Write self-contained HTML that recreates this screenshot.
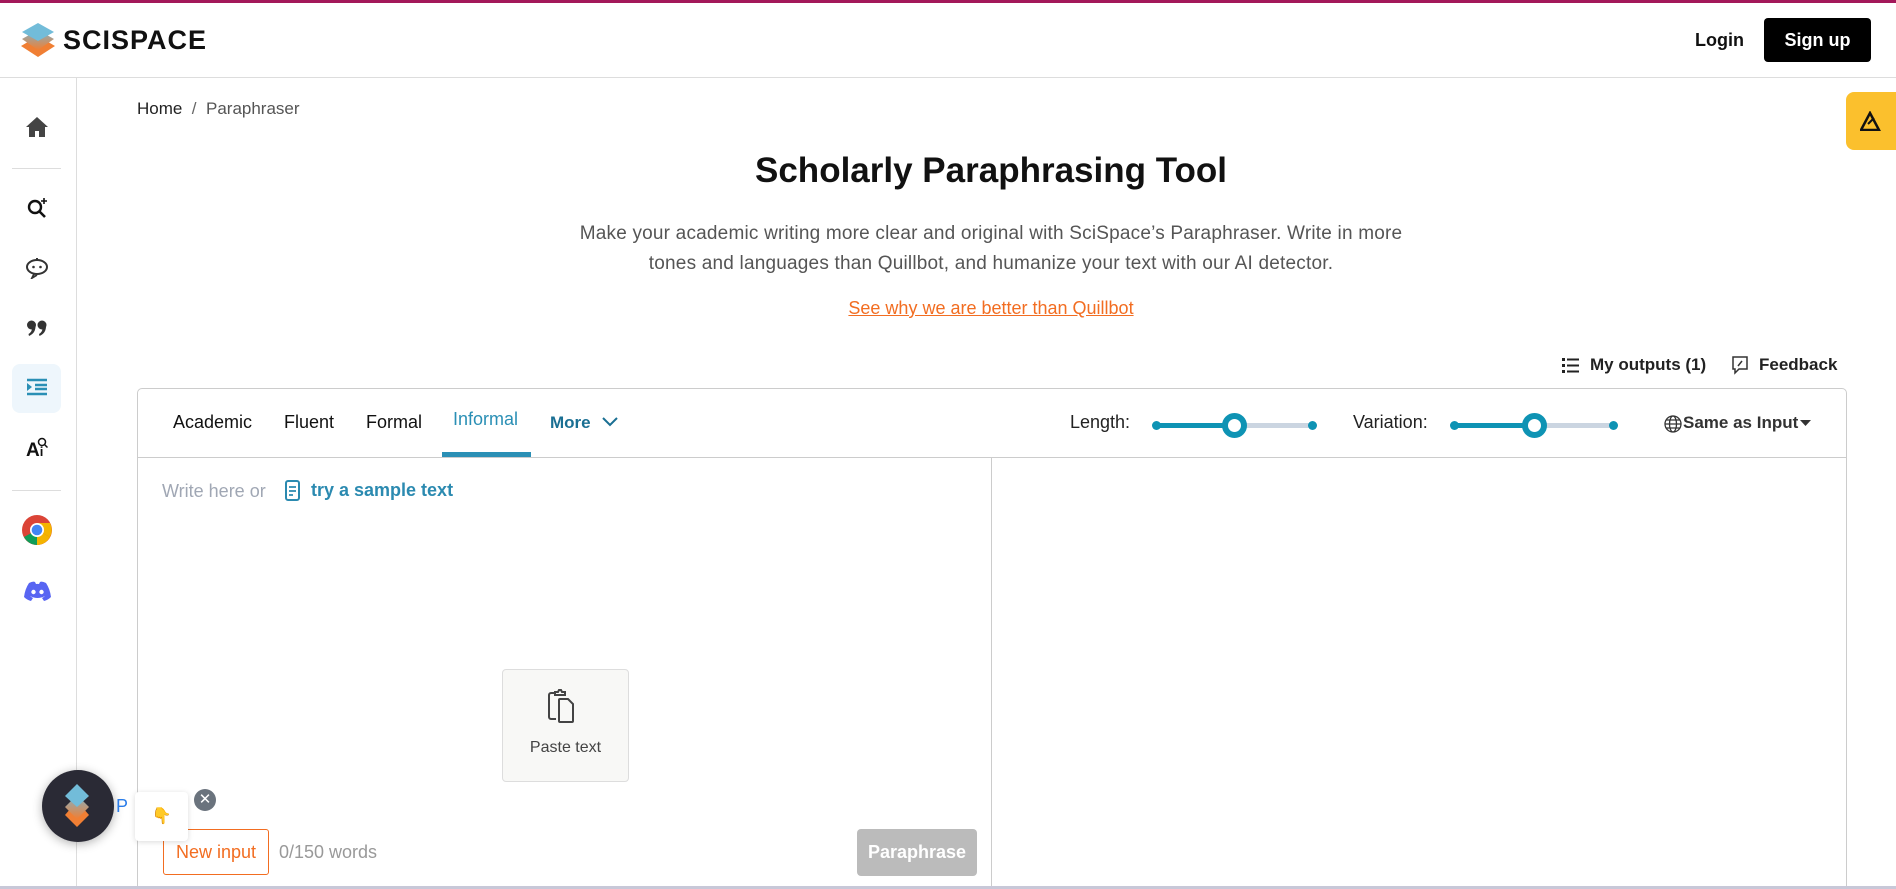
<!DOCTYPE html>
<html><head><meta charset="utf-8"><style>
*{box-sizing:border-box;margin:0;padding:0}
html,body{width:1896px;height:889px;overflow:hidden}
body{background:#fff;font-family:"Liberation Sans",sans-serif;color:#111;position:relative}
.a{position:absolute}
.t{white-space:nowrap}
</style></head><body>
<div class="a" style="left:0;top:0;width:1896px;height:3px;background:#a3185a"></div>
<div class="a" style="left:0;top:77px;width:1896px;height:1px;background:#ddd"></div>
<!-- logo -->
<svg class="a" style="left:20px;top:22px" width="36" height="36" viewBox="0 0 36 36">
<defs><linearGradient id="g" x1="0" y1="0" x2="0" y2="1"><stop offset="0" stop-color="#7fb3c9"/><stop offset="1" stop-color="#f07f34"/></linearGradient></defs>
<polygon points="18,14 35,24 18,35 1,24" fill="#f07f34"/>
<polygon points="18,8 34,17 18,28 2,17" fill="url(#g)"/>
<polygon points="18,1 34,10 18,19 2,10" fill="#72bcd9"/>
</svg>
<div class="a t" style="left:63px;top:25px;font-size:27px;font-weight:bold;letter-spacing:1px">SCISPACE</div>
<div class="a t" style="left:1695px;top:30px;font-size:18px;font-weight:bold">Login</div>
<div class="a t" style="left:1764px;top:18px;width:107px;height:44px;background:#000;color:#fff;border-radius:4px;font-size:18px;font-weight:bold;text-align:center;line-height:44px">Sign up</div>
<!-- sidebar -->
<div class="a" style="left:76px;top:78px;width:1px;height:811px;background:#ddd"></div>
<div class="a" style="left:12px;top:168px;width:49px;height:1px;background:#ddd"></div>
<div class="a" style="left:12px;top:490px;width:49px;height:1px;background:#ddd"></div>
<svg class="a" style="left:25px;top:116px" width="24" height="22" viewBox="0 0 24 22"><path d="M12 1L1 11h3v10h6v-6h4v6h6V11h3z" fill="#444"/></svg>
<svg class="a" style="left:26px;top:196px" width="24" height="24" viewBox="0 0 24 24"><circle cx="9" cy="11" r="6" fill="none" stroke="#111" stroke-width="2.4"/><path d="M13 15l6 6" stroke="#111" stroke-width="2.6"/><path d="M18 2v6M15 5h6" stroke="#111" stroke-width="1.6"/></svg>
<svg class="a" style="left:25px;top:257px" width="24" height="22" viewBox="0 0 24 22"><ellipse cx="12" cy="10" rx="10" ry="7" fill="none" stroke="#333" stroke-width="2"/><circle cx="8.5" cy="10" r="1.3" fill="#333"/><circle cx="15.5" cy="10" r="1.3" fill="#333"/><path d="M9 17l-2 4 5-3" fill="none" stroke="#333" stroke-width="1.8"/><path d="M12 1v2" stroke="#333" stroke-width="2"/></svg>
<svg class="a" style="left:27px;top:320px" width="20" height="16" viewBox="0 0 20 16"><g fill="#333"><circle cx="4.5" cy="5" r="4.5"/><path d="M8.5 5Q9 13 2 16L1.5 14Q5 12 5 8z"/><circle cx="15" cy="5" r="4.5"/><path d="M19 5Q19.5 13 12.5 16L12 14Q15.5 12 15.5 8z"/></g></svg>
<div class="a" style="left:12px;top:364px;width:49px;height:49px;background:#eef6fc;border-radius:8px"></div>
<svg class="a" style="left:27px;top:378px" width="20" height="18" viewBox="0 0 20 18"><path d="M0 2h20M8 7h12M8 11h12M0 16h20" stroke="#2a8fb5" stroke-width="2.4"/><path d="M0 5l5 4-5 4z" fill="#2a8fb5"/></svg>
<div class="a t" style="left:26px;top:440px;font-size:19px;font-weight:bold">A<span style="font-size:13px">i</span></div>
<svg class="a" style="left:37px;top:437px" width="11" height="11"><circle cx="5" cy="5" r="3.5" fill="none" stroke="#111" stroke-width="1.5"/><path d="M7.5 7.5l3 3" stroke="#111" stroke-width="1.5"/></svg>
<svg class="a" style="left:22px;top:515px" width="30" height="30" viewBox="0 0 30 30"><circle cx="15" cy="15" r="15" fill="#db4437"/><path d="M15 15L2 22A15 15 0 0 0 15 30z" fill="#0f9d58"/><path d="M15 15L28 22A15 15 0 0 1 15 30z" fill="#f4b400"/><path d="M15 15L28 22A15 15 0 0 0 28 8 L15 8z" fill="#f4b400"/><circle cx="15" cy="15" r="7" fill="#fff"/><circle cx="15" cy="15" r="5.3" fill="#4285f4"/></svg>
<svg class="a" style="left:24px;top:581px" width="27" height="20" viewBox="0 0 27 20"><path d="M5 2Q9 0 11 1L12 3Q13.5 2.8 15 3L16 1Q18 0 22 2Q26 8 27 16Q24 19 20 20L18 17Q20 16 21 15Q13.5 19 6 15Q7 16 9 17L7 20Q3 19 0 16Q1 8 5 2z" fill="#5865f2"/><circle cx="9.5" cy="11" r="2.2" fill="#fff"/><circle cx="17.5" cy="11" r="2.2" fill="#fff"/></svg>
<!-- breadcrumb -->
<div class="a t" style="left:137px;top:99px;font-size:17px;color:#222">Home &nbsp;<span style="color:#666">/</span>&nbsp; <span style="color:#555">Paraphraser</span></div>
<div class="a t" style="left:0;width:1982px;top:151px;text-align:center;font-size:35px;font-weight:bold;color:#111">Scholarly Paraphrasing Tool</div>
<div class="a" style="left:0;width:1982px;top:219px;text-align:center;font-size:19px;color:#555;line-height:30px;letter-spacing:0.2px">Make your academic writing more clear and original with SciSpace’s Paraphraser. Write in more<br>tones and languages than Quillbot, and humanize your text with our AI detector.</div>
<div class="a t" style="left:0;width:1982px;top:298px;text-align:center;font-size:18px;color:#f26d21;text-decoration:underline">See why we are better than Quillbot</div>
<!-- outputs -->
<svg class="a" style="left:1562px;top:357px" width="18" height="16"><g fill="#222"><rect x="0" y="1" width="3" height="3"/><rect x="0" y="7" width="3" height="3"/><rect x="0" y="13" width="3" height="3"/><rect x="5" y="1.5" width="12" height="2"/><rect x="5" y="7.5" width="12" height="2"/><rect x="5" y="13.5" width="12" height="2"/></g></svg>
<div class="a t" style="left:1590px;top:355px;font-size:17px;font-weight:bold;color:#222">My outputs (1)</div>
<svg class="a" style="left:1731px;top:356px" width="18" height="19" viewBox="0 0 18 19"><path d="M2 1h14v12H8l-4 4v-4H2z" fill="none" stroke="#333" stroke-width="1.5"/><path d="M7 10l4-5" stroke="#333" stroke-width="1.5"/></svg>
<div class="a t" style="left:1759px;top:355px;font-size:17px;font-weight:bold;color:#222">Feedback</div>
<!-- card -->
<div class="a" style="left:137px;top:388px;width:1710px;height:520px;border:1px solid #ccc;border-radius:5px"></div>
<div class="a" style="left:137px;top:457px;width:1710px;height:1px;background:#ccc"></div>
<div class="a" style="left:991px;top:457px;width:1px;height:440px;background:#ccc"></div>
<div class="a t" style="left:173px;top:412px;font-size:18px;color:#111">Academic</div>
<div class="a t" style="left:284px;top:412px;font-size:18px;color:#111">Fluent</div>
<div class="a t" style="left:366px;top:412px;font-size:18px;color:#111">Formal</div>
<div class="a t" style="left:453px;top:409px;font-size:18px;color:#2a8fb5">Informal</div>
<div class="a" style="left:442px;top:452px;width:89px;height:5px;background:#2a8fb5"></div>
<div class="a t" style="left:550px;top:413px;font-size:17px;color:#1a6f93;font-weight:bold">More</div>
<svg class="a" style="left:602px;top:417px" width="16" height="10"><path d="M1 1l7 7 7-7" fill="none" stroke="#1a6f93" stroke-width="2"/></svg>
<div class="a t" style="left:1070px;top:412px;font-size:18px;color:#222">Length:</div>
<div class="a" style="left:1156px;top:423px;width:157px;height:5px;background:#cbd5e1;border-radius:3px"></div>
<div class="a" style="left:1156px;top:423px;width:78px;height:5px;background:#0e93b4"></div>
<div class="a" style="left:1152px;top:421px;width:9px;height:9px;border-radius:50%;background:#0e93b4"></div>
<div class="a" style="left:1308px;top:421px;width:9px;height:9px;border-radius:50%;background:#0e93b4"></div>
<div class="a" style="left:1222px;top:413px;width:25px;height:25px;border-radius:50%;border:6px solid #0e93b4;background:#fff"></div>
<div class="a t" style="left:1353px;top:412px;font-size:18px;color:#222">Variation:</div>
<div class="a" style="left:1454px;top:423px;width:159px;height:5px;background:#cbd5e1;border-radius:3px"></div>
<div class="a" style="left:1454px;top:423px;width:80px;height:5px;background:#0e93b4"></div>
<div class="a" style="left:1450px;top:421px;width:9px;height:9px;border-radius:50%;background:#0e93b4"></div>
<div class="a" style="left:1609px;top:421px;width:9px;height:9px;border-radius:50%;background:#0e93b4"></div>
<div class="a" style="left:1522px;top:413px;width:25px;height:25px;border-radius:50%;border:6px solid #0e93b4;background:#fff"></div>
<svg class="a" style="left:1664px;top:415px" width="18" height="18" viewBox="0 0 18 18"><g fill="none" stroke="#333" stroke-width="1.3"><circle cx="9" cy="9" r="8"/><ellipse cx="9" cy="9" rx="3.5" ry="8"/><path d="M1 9h16M2.5 5h13M2.5 13h13"/></g></svg>
<div class="a t" style="left:1683px;top:413px;font-size:17px;font-weight:bold;color:#333">Same as Input</div>
<svg class="a" style="left:1800px;top:419px" width="11" height="8"><path d="M0 1h11L5.5 7z" fill="#333"/></svg>
<!-- input -->
<div class="a t" style="left:162px;top:481px;font-size:18px;color:#a0a7b4">Write here or</div>
<svg class="a" style="left:285px;top:480px" width="15" height="21" viewBox="0 0 15 21"><rect x="1" y="1" width="13" height="19" rx="2" fill="none" stroke="#2b8ab0" stroke-width="2"/><path d="M4 7h7M4 11h7M4 15h4" stroke="#2b8ab0" stroke-width="1.8"/></svg>
<div class="a t" style="left:311px;top:480px;font-size:18px;font-weight:bold;color:#2b8ab0">try a sample text</div>
<div class="a" style="left:502px;top:669px;width:127px;height:113px;background:#f8f8f6;border:1px solid #ddd;border-radius:4px"></div>
<svg class="a" style="left:546px;top:689px" width="38" height="36" viewBox="0 0 38 36"><g fill="none" stroke="#444" stroke-width="2"><path d="M9 4H5a2 2 0 0 0-2 2v22a2 2 0 0 0 2 2h5"/><path d="M9 6V3h3l1-2h2l1 2h3v3z"/><path d="M14 10h8l5 5v17a1 1 0 0 1-1 1H14a1 1 0 0 1-1-1V11a1 1 0 0 1 1-1z"/></g></svg>
<div class="a t" style="left:502px;top:739px;width:127px;text-align:center;font-size:16px;color:#444">Paste text</div>
<div class="a t" style="left:163px;top:829px;width:106px;height:46px;border:1px solid #f26d21;border-radius:3px;color:#f26d21;font-size:18px;text-align:center;line-height:44px">New input</div>
<div class="a t" style="left:279px;top:842px;font-size:18px;color:#999">0/150 words</div>
<div class="a t" style="left:857px;top:829px;width:120px;height:47px;background:#bbb;border-radius:4px;color:#fff;font-size:18px;font-weight:bold;text-align:center;line-height:47px">Paraphrase</div>
<!-- floating widget -->
<div class="a" style="left:42px;top:770px;width:72px;height:72px;border-radius:50%;background:#2a2a35;box-shadow:0 2px 10px rgba(0,0,0,.3)"></div>
<svg class="a" style="left:55px;top:783px" width="44" height="46" viewBox="0 0 44 46"><defs><linearGradient id="g2" x1="0" y1="0" x2="0" y2="1"><stop offset="0" stop-color="#7fb3c9"/><stop offset="1" stop-color="#f07f34"/></linearGradient></defs><polygon points="22,18 34,32 22,44 10,32" fill="#f07f34"/><polygon points="22,12 34,24 22,36 10,24" fill="url(#g2)"/><polygon points="22,1 34,13 22,24 10,13" fill="#72bcd9"/></svg>
<div class="a t" style="left:116px;top:796px;font-size:18px;color:#2b7de9">P</div>
<div class="a" style="left:135px;top:792px;width:53px;height:49px;background:#fff;border-radius:4px;box-shadow:0 1px 6px rgba(0,0,0,.15);text-align:center;line-height:49px;font-size:16px;color:#f5b400">👇</div>
<div class="a" style="left:194px;top:789px;width:22px;height:22px;border-radius:50%;background:#6a737d;color:#fff;text-align:center;line-height:21px;font-size:15px">✕</div>
<!-- right tab -->
<div class="a" style="left:1846px;top:92px;width:50px;height:58px;background:#fbc02d;border-radius:8px 0 0 8px"></div>
<svg class="a" style="left:1860px;top:111px" width="22" height="20" viewBox="0 0 22 20"><path d="M1 19L10 2l9 17z" fill="none" stroke="#111" stroke-width="2.5"/><path d="M8 13l6-6" stroke="#111" stroke-width="2"/></svg>
<div class="a" style="left:0;top:886px;width:1896px;height:3px;background:#c8c8d8"></div>
</body></html>
